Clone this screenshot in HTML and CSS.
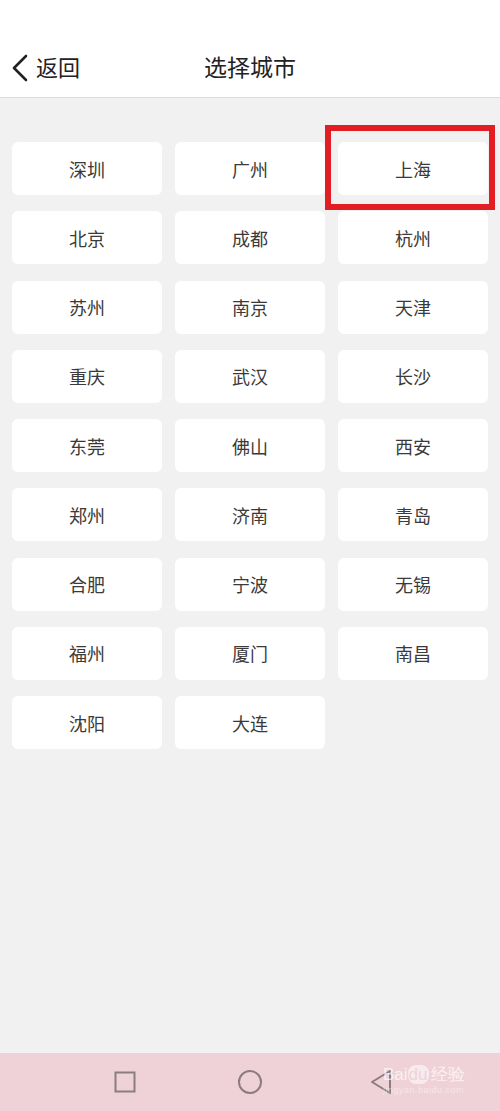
FILE: index.html
```html
<!DOCTYPE html>
<html lang="zh">
<head>
  <meta charset="UTF-8">
  <title>选择城市</title>
  <link rel="stylesheet" href="styles.css">
</head>
<body>
  <div class="page">
    <header class="topbar">
      <div class="back">
        <svg class="back-icon" width="18" height="28" viewBox="0 0 18 28">
          <path d="M15 2 L3 14 L15 26" fill="none" stroke="#222" stroke-width="2.6" stroke-linecap="round" stroke-linejoin="round"/>
        </svg>
        <span>返回</span>
      </div>
      <div class="title">选择城市</div>
    </header>

    <main class="content">
      <div class="city-grid">
        <div class="city">深圳</div>
        <div class="city">广州</div>
        <div class="city selected">上海</div>
        <div class="city">北京</div>
        <div class="city">成都</div>
        <div class="city">杭州</div>
        <div class="city">苏州</div>
        <div class="city">南京</div>
        <div class="city">天津</div>
        <div class="city">重庆</div>
        <div class="city">武汉</div>
        <div class="city">长沙</div>
        <div class="city">东莞</div>
        <div class="city">佛山</div>
        <div class="city">西安</div>
        <div class="city">郑州</div>
        <div class="city">济南</div>
        <div class="city">青岛</div>
        <div class="city">合肥</div>
        <div class="city">宁波</div>
        <div class="city">无锡</div>
        <div class="city">福州</div>
        <div class="city">厦门</div>
        <div class="city">南昌</div>
        <div class="city">沈阳</div>
        <div class="city">大连</div>
      </div>
    </main>

    <nav class="navbar">
      <svg width="22" height="22" viewBox="0 0 22 22">
        <rect x="1.5" y="1.5" width="19" height="19" fill="none" stroke="#8a7c80" stroke-width="2"/>
      </svg>
      <svg width="26" height="26" viewBox="0 0 26 26">
        <circle cx="13" cy="13" r="11" fill="none" stroke="#8a7c80" stroke-width="2"/>
      </svg>
      <div class="nav-back">
        <svg width="24" height="26" viewBox="0 0 24 26">
          <path d="M21 2 L3 13 L21 24 Z" fill="none" stroke="#8a7c80" stroke-width="2" stroke-linejoin="round"/>
        </svg>
        <div class="watermark">
          <div>Bai<b>du</b>经验</div>
          <div class="watermark-url">jingyan.baidu.com</div>
        </div>
      </div>
    </nav>
  </div>
</body>
</html>
```

FILE: styles.css
```css
body {
  margin: 0;
  background: #f1f1f1;
  font-family: "Noto Sans CJK SC", "Noto Sans", sans-serif;
  color: #333;
}

.page {
  height: 1111px;
  display: flex;
  flex-direction: column;
}

.topbar {
  height: 98px;
  background: #fff;
  border-bottom: 1px solid #dcdcdc;
  box-sizing: border-box;
  position: relative;
  display: flex;
  align-items: center;
  padding-top: 38px;
}

.back {
  display: flex;
  align-items: center;
  gap: 7px;
  padding-left: 11px;
  font-size: 22px;
  color: #222;
}

.back span {
  line-height: 1;
  margin-top: -3px;
}

.title {
  position: absolute;
  left: 0;
  right: 0;
  bottom: 19px;
  text-align: center;
  font-size: 23px;
  color: #222;
  line-height: 1;
  pointer-events: none;
}

.content {
  flex: 1;
  padding: 44px 12px 0;
}

.city-grid {
  display: grid;
  grid-template-columns: repeat(3, 150px);
  column-gap: 13px;
  row-gap: 16.25px;
}

.city {
  height: 53px;
  background: #fff;
  border-radius: 6px;
  display: flex;
  align-items: center;
  justify-content: center;
  font-size: 18px;
  color: #3a3a3a;
}

.city.selected {
  position: relative;
}

.city.selected::after {
  content: "";
  position: absolute;
  left: -13px;
  top: -17px;
  right: -7px;
  bottom: -15px;
  border: 6px solid #e31d24;
}

.navbar {
  height: 58px;
  background: #efd2d8;
  display: flex;
  align-items: center;
  gap: 101px;
  padding-left: 114px;
}

.nav-back {
  position: relative;
  display: flex;
  align-items: center;
  margin-left: 5px;
}

.watermark {
  position: absolute;
  left: 14px;
  top: -4px;
  font-family: "Liberation Sans", sans-serif;
  font-size: 17px;
  line-height: 20px;
  color: rgba(255, 255, 255, 0.7);
  white-space: nowrap;
}

.watermark b {
  font-weight: normal;
  background: rgba(255, 255, 255, 0.55);
  color: #efd2d8;
  border-radius: 8px;
  padding: 0 1px;
  margin-right: 2px;
}

.watermark-url {
  font-size: 9px;
  line-height: 11px;
  color: rgba(255, 255, 255, 0.45);
  letter-spacing: 0.5px;
}
```
